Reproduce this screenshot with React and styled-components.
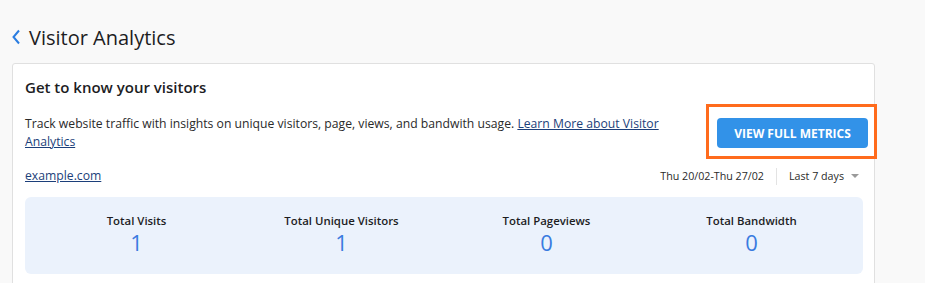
import React from 'react';
import styled, { createGlobalStyle } from 'styled-components';

const GlobalStyle = createGlobalStyle`
	html, body {
		margin: 0;
		padding: 0;
		background: #f9f9f9;
		font-family: 'Open Sans', 'Noto Sans', sans-serif;
		color: #1d1d1f;
	}
`;

const stats = [
	{ label: 'Total Visits', value: 1 },
	{ label: 'Total Unique Visitors', value: 1 },
	{ label: 'Total Pageviews', value: 0 },
	{ label: 'Total Bandwidth', value: 0 },
];

const App = () => {
	return (
		<>
			<GlobalStyle />
			<Page>
				<Header>
					<BackIcon viewBox="0 0 10 16">
						<path d="M8 1.5 L2.5 8 L8 14.5" fill="none" stroke="#2a7de1" strokeWidth="2" />
					</BackIcon>
					<PageTitle>Visitor Analytics</PageTitle>
				</Header>
				<Card>
					<CardTitle>Get to know your visitors</CardTitle>
					<IntroRow>
						<Description>
							Track website traffic with insights on unique visitors, page, views, and bandwith usage.{' '}
							<Link href="#">Learn More about Visitor Analytics</Link>
						</Description>
						<ButtonWrap>
							<Highlight />
							<PrimaryButton>VIEW FULL METRICS</PrimaryButton>
						</ButtonWrap>
					</IntroRow>
					<FilterRow>
						<Link href="#">example.com</Link>
						<RangeGroup>
							<DateRange>Thu 20/02-Thu 27/02</DateRange>
							<Separator />
							<PeriodSelect>
								Last 7 days
								<Caret viewBox="0 0 8 4">
									<path d="M0 0 H8 L4 4 Z" fill="#9a9a9a" />
								</Caret>
							</PeriodSelect>
						</RangeGroup>
					</FilterRow>
					<StatsPanel>
						{stats.map((s) => (
							<Stat key={s.label}>
								<StatLabel>{s.label}</StatLabel>
								<StatValue>{s.value}</StatValue>
							</Stat>
						))}
					</StatsPanel>
				</Card>
			</Page>
		</>
	);
};

export default App;

const Page = styled.div`
	padding: 24px 50px 0 12px;
	height: 283px;
	box-sizing: border-box;
	overflow: hidden;
`;

const Header = styled.div`
	display: flex;
	align-items: center;
	gap: 8px;
	height: 26px;
	margin-bottom: 13px;
`;

const BackIcon = styled.svg`
	width: 10px;
	height: 16px;
	margin-left: -1px;
`;

const PageTitle = styled.h1`
	margin: 0;
	font-size: 20px;
	font-weight: 400;
	color: #1d1d1f;
`;

const Card = styled.div`
	background: #fff;
	border: 1px solid #e0e0e0;
	border-radius: 3px;
	padding: 12px 11px 20px 12px;
	min-height: 260px;
`;

const CardTitle = styled.h2`
	margin: 0;
	font-size: 15px;
	font-weight: 600;
	line-height: 22px;
	color: #1d1d1f;
`;

const IntroRow = styled.div`
	display: flex;
	justify-content: space-between;
	align-items: center;
	margin-top: 17px;
`;

const Description = styled.p`
	margin: 0;
	max-width: 665px;
	font-size: 12.2px;
	line-height: 18px;
	color: #2a2a2a;
`;

const Link = styled.a`
	color: #1c3f7a;
	text-decoration: underline;
	font-size: 12.2px;
	line-height: 18px;
`;

const ButtonWrap = styled.div`
	position: relative;
	margin-right: -5px;
`;

const Highlight = styled.div`
	position: absolute;
	top: -14px;
	left: -11px;
	right: -9px;
	bottom: -11px;
	border: 3px solid #ff6b1c;
	pointer-events: none;
`;

const PrimaryButton = styled.button`
	display: block;
	width: 151px;
	height: 30px;
	border: none;
	border-radius: 4px;
	background: #3292e8;
	color: #fff;
	font-family: 'Open Sans', sans-serif;
	font-size: 12px;
	font-weight: 700;
	cursor: pointer;
`;

const FilterRow = styled.div`
	display: flex;
	justify-content: space-between;
	align-items: center;
	margin-top: 16px;
	height: 18px;
`;

const RangeGroup = styled.div`
	display: flex;
	align-items: center;
	font-size: 10.7px;
	color: #2a2a2a;
	margin-right: 4px;
`;

const DateRange = styled.span``;

const Separator = styled.span`
	width: 1px;
	height: 17px;
	background: #e3e3e3;
	margin: 0 12px;
`;

const PeriodSelect = styled.span`
	display: flex;
	align-items: center;
	gap: 7px;
`;

const Caret = styled.svg`
	width: 8px;
	height: 4px;
`;

const StatsPanel = styled.div`
	display: grid;
	grid-template-columns: repeat(4, 1fr);
	margin-top: 12px;
	padding: 16px 9px;
	background: #ebf2fc;
	border-radius: 6px;
	height: 77px;
	box-sizing: border-box;
`;

const Stat = styled.div`
	display: flex;
	flex-direction: column;
	align-items: center;
`;

const StatLabel = styled.div`
	font-size: 11.4px;
	font-weight: 600;
	line-height: 16px;
	color: #1d1d1f;
`;

const StatValue = styled.div`
	font-size: 22px;
	font-weight: 400;
	line-height: 26px;
	color: #3a7be0;
`;
